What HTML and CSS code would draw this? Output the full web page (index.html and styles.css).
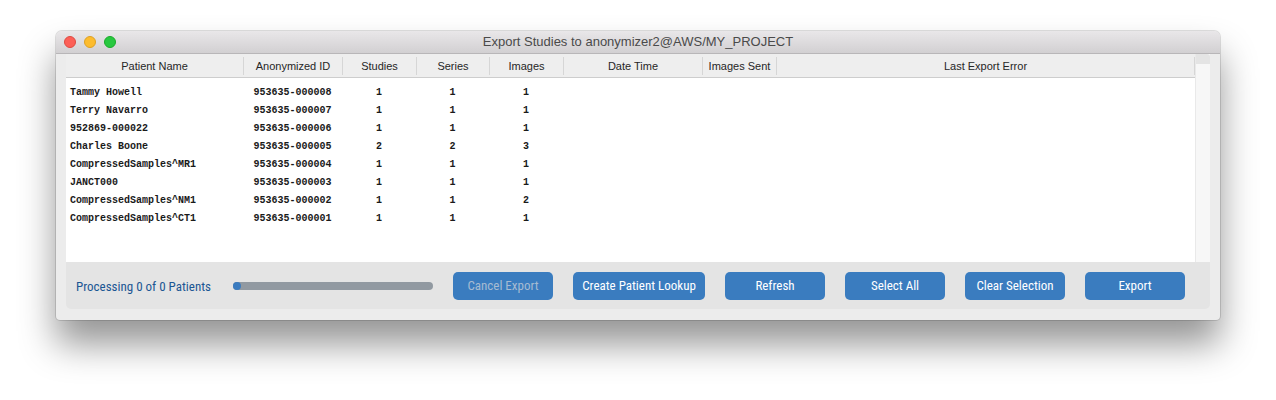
FILE: index.html
```html
<!DOCTYPE html>
<html>
<head>
<meta charset="utf-8">
<link rel="stylesheet" href="styles.css">
</head>
<body>
<div class="window">
  <div class="titlebar">
    <div class="lights">
      <span class="light red"></span>
      <span class="light yellow"></span>
      <span class="light green"></span>
    </div>
    <div class="title">Export Studies to anonymizer2@AWS/MY_PROJECT</div>
  </div>
  <div class="content">
    <div class="tablewrap">
      <div class="table">
        <div class="row head">
          <div class="cell">Patient Name</div>
          <div class="cell">Anonymized ID</div>
          <div class="cell">Studies</div>
          <div class="cell">Series</div>
          <div class="cell">Images</div>
          <div class="cell">Date Time</div>
          <div class="cell">Images Sent</div>
          <div class="cell">Last Export Error</div>
        </div>
        <div class="rows">
          <div class="row data"><div class="cell name">Tammy Howell</div><div class="cell">953635-000008</div><div class="cell">1</div><div class="cell">1</div><div class="cell">1</div><div class="cell"></div><div class="cell"></div><div class="cell"></div></div>
          <div class="row data"><div class="cell name">Terry Navarro</div><div class="cell">953635-000007</div><div class="cell">1</div><div class="cell">1</div><div class="cell">1</div><div class="cell"></div><div class="cell"></div><div class="cell"></div></div>
          <div class="row data"><div class="cell name">952869-000022</div><div class="cell">953635-000006</div><div class="cell">1</div><div class="cell">1</div><div class="cell">1</div><div class="cell"></div><div class="cell"></div><div class="cell"></div></div>
          <div class="row data"><div class="cell name">Charles Boone</div><div class="cell">953635-000005</div><div class="cell">2</div><div class="cell">2</div><div class="cell">3</div><div class="cell"></div><div class="cell"></div><div class="cell"></div></div>
          <div class="row data"><div class="cell name">CompressedSamples^MR1</div><div class="cell">953635-000004</div><div class="cell">1</div><div class="cell">1</div><div class="cell">1</div><div class="cell"></div><div class="cell"></div><div class="cell"></div></div>
          <div class="row data"><div class="cell name">JANCT000</div><div class="cell">953635-000003</div><div class="cell">1</div><div class="cell">1</div><div class="cell">1</div><div class="cell"></div><div class="cell"></div><div class="cell"></div></div>
          <div class="row data"><div class="cell name">CompressedSamples^NM1</div><div class="cell">953635-000002</div><div class="cell">1</div><div class="cell">1</div><div class="cell">2</div><div class="cell"></div><div class="cell"></div><div class="cell"></div></div>
          <div class="row data"><div class="cell name">CompressedSamples^CT1</div><div class="cell">953635-000001</div><div class="cell">1</div><div class="cell">1</div><div class="cell">1</div><div class="cell"></div><div class="cell"></div><div class="cell"></div></div>
        </div>
      </div>
      <div class="scrollbar"><div class="scroll-corner"></div></div>
    </div>
    <div class="footer">
      <div class="status">Processing 0 of 0 Patients</div>
      <div class="progress"><div class="progress-dot"></div></div>
      <div class="buttons">
        <button class="btn disabled">Cancel Export</button>
        <button class="btn wide">Create Patient Lookup</button>
        <button class="btn">Refresh</button>
        <button class="btn">Select All</button>
        <button class="btn">Clear Selection</button>
        <button class="btn">Export</button>
      </div>
    </div>
  </div>
</div>
</body>
</html>
```

FILE: styles.css
```css
html, body {
  margin: 0;
  padding: 0;
  background: #ffffff;
}

body {
  font-family: "Liberation Sans", Arial, sans-serif;
  min-height: 400px;
  overflow: hidden;
}

.window {
  margin: 31px 0 0 56px;
  width: 1164px;
  height: 289px;
  box-sizing: border-box;
  background: #ececec;
  border-radius: 6px 6px 4px 4px;
  box-shadow: 0 0 0 1px rgba(0, 0, 0, 0.12), 0 24px 36px rgba(0, 0, 0, 0.42);
  display: flex;
  flex-direction: column;
}

.titlebar {
  height: 23px;
  box-sizing: border-box;
  border-bottom: 1px solid #b8b6b8;
  background: linear-gradient(#e9e7e9, #d2d0d2);
  border-radius: 6px 6px 0 0;
  display: flex;
  align-items: center;
  position: relative;
}

.lights {
  display: flex;
  gap: 8px;
  padding-left: 8px;
}

.light {
  width: 12px;
  height: 12px;
  border-radius: 50%;
  box-sizing: border-box;
}

.red { background: #fc5f57; border: 0.5px solid #de4a41; }
.yellow { background: #fdbc2e; border: 0.5px solid #dea123; }
.green { background: #28c840; border: 0.5px solid #1aab29; }

.title {
  position: absolute;
  left: 0;
  right: 0;
  text-align: center;
  font-size: 13px;
  color: #4a4a4a;
  line-height: 22px;
}

.content {
  margin: 0 10px;
  display: flex;
  flex-direction: column;
}

.tablewrap {
  display: flex;
  height: 208px;
  background: #ffffff;
}

.table {
  flex: 1;
  display: flex;
  flex-direction: column;
}

.row {
  display: grid;
  grid-template-columns: 177px 99px 74px 73px 74px 139px 74px 1fr;
}

.head {
  height: 24px;
  box-sizing: border-box;
  background: #eeeeee;
  border-bottom: 1px solid #cdcdcd;
  align-items: center;
}

.head .cell {
  font-size: 11px;
  color: #262626;
  text-align: center;
  height: 18px;
  line-height: 18px;
  border-left: 1px solid #d6d6d6;
  margin-top: 1px;
}

.head .cell:first-child {
  border-left: none;
}

.head .cell:last-child {
  border-right: 1px solid #d6d6d6;
}

.rows {
  padding-top: 5px;
}

.data {
  height: 18px;
  align-items: center;
}

.data .cell {
  font-family: "Liberation Mono", "Courier New", monospace;
  font-weight: bold;
  font-size: 10px;
  color: #1a1a1a;
  text-align: center;
  white-space: nowrap;
}

.data .cell.name {
  text-align: left;
  padding-left: 4px;
}

.scrollbar {
  width: 15px;
  box-sizing: border-box;
  background: #f7f7f7;
  border-left: 1px solid #e9e9e9;
}

.scroll-corner {
  height: 10px;
  background: #e4e4e4;
  border-radius: 0 3px 0 0;
}

.footer {
  height: 47px;
  background: #e4e4e4;
  border-radius: 0 0 5px 5px;
  display: flex;
  align-items: center;
  padding-left: 10px;
  font-family: "Liberation Sans Narrow", "Roboto Condensed", "Roboto", sans-serif;
}

.status {
  width: 157px;
  font-size: 13px;
  color: #1b5693;
  white-space: nowrap;
  margin-top: 1px;
}

.progress {
  width: 200px;
  height: 8px;
  border-radius: 4px;
  background: #9199a1;
  position: relative;
}

.progress-dot {
  position: absolute;
  left: 0;
  top: 0;
  width: 8px;
  height: 8px;
  border-radius: 50%;
  background: #3a7bbf;
}

.buttons {
  display: flex;
  gap: 20px;
  margin-left: 20px;
}

.btn {
  width: 100px;
  height: 28px;
  border: none;
  border-radius: 5px;
  background: #3a7cbf;
  color: #ffffff;
  font-family: inherit;
  font-size: 13px;
  padding: 0;
  white-space: nowrap;
}

.btn.wide {
  width: 132px;
}

.btn.disabled {
  color: #a6bbd2;
}
```
